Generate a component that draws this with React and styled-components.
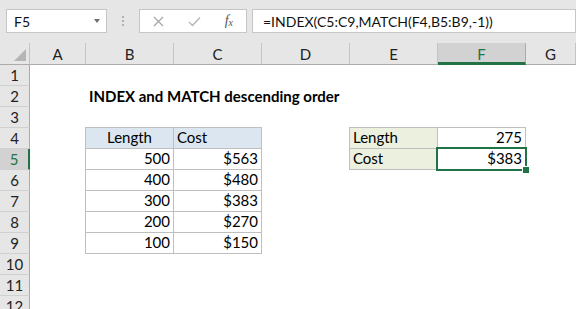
import styled, { createGlobalStyle } from 'styled-components'

const GlobalStyle = createGlobalStyle`
  body {
    margin: 0;
    background: #fff;
    font-family: Lato, "Liberation Sans", sans-serif;
  }
`

const GREEN = '#217346'
const COLUMNS = ['A', 'B', 'C', 'D', 'E', 'F', 'G']
const ROW_COUNT = 12

// contenu des cellules: cle = adresse
const cellules = {
    B2: { text: 'INDEX and MATCH descending order', bold: true },
    B4: { text: 'Length', table: true, fill: '#dce6f1', align: 'center' },
    C4: { text: 'Cost', table: true, fill: '#dce6f1' },
    B5: { text: '500', table: true, align: 'right' },
    C5: { text: '$563', table: true, align: 'right' },
    B6: { text: '400', table: true, align: 'right' },
    C6: { text: '$480', table: true, align: 'right' },
    B7: { text: '300', table: true, align: 'right' },
    C7: { text: '$383', table: true, align: 'right' },
    B8: { text: '200', table: true, align: 'right' },
    C8: { text: '$270', table: true, align: 'right' },
    B9: { text: '100', table: true, align: 'right' },
    C9: { text: '$150', table: true, align: 'right' },
    E4: { text: 'Length', table: true, fill: '#ebf1de' },
    F4: { text: '275', table: true, align: 'right' },
    E5: { text: 'Cost', table: true, fill: '#ebf1de' },
    F5: { text: '$383', table: true, align: 'right', selected: true },
}

const App = () => {
    return (
        <Window>
            <GlobalStyle />
            <Toolbar>
                <NameBox>
                    <span>F5</span>
                    <DropArrow />
                </NameBox>
                <Grip>
                    <i /><i /><i />
                </Grip>
                <ActionBox>
                    <svg width="11" height="11" viewBox="0 0 11 11">
                        <path d="M1 1 L10 10 M10 1 L1 10" stroke="#a8a8a8" strokeWidth="1.3" fill="none" />
                    </svg>
                    <svg width="13" height="11" viewBox="0 0 13 11">
                        <path d="M1 6 L4.5 9.5 L12 1.5" stroke="#b4b4b4" strokeWidth="1.3" fill="none" />
                    </svg>
                    <Fx>f<sub>x</sub></Fx>
                </ActionBox>
                <FormulaBox>=INDEX(C5:C9,MATCH(F4,B5:B9,-1))</FormulaBox>
            </Toolbar>

            <Sheet>
                <Corner><Triangle /></Corner>
                {COLUMNS.map((col) => (
                    <ColHead key={col} $active={col === 'F'}>{col}</ColHead>
                ))}

                {Array.from({ length: ROW_COUNT }, (_, i) => i + 1).map((row) => (
                    <>
                        <RowHead key={'r' + row} $active={row === 5}>{row}</RowHead>
                        {COLUMNS.map((col) => {
                            const c = cellules[col + row] || {}
                            return (
                                <Cell
                                    key={col + row}
                                    $table={c.table}
                                    $fill={c.fill}
                                    $align={c.align}
                                    $bold={c.bold}
                                >
                                    {c.text}
                                    {c.selected ? <Selection><Handle /></Selection> : null}
                                </Cell>
                            )
                        })}
                    </>
                ))}
            </Sheet>
        </Window>
    )
}

const Window = styled.div`
    width: 576px;
    height: 309px;
    overflow: hidden;
    background: #fff;
`

const Toolbar = styled.div`
    display: flex;
    align-items: flex-start;
    height: 43px;
    box-sizing: border-box;
    padding: 9px 0 0 6px;
    background: #e6e6e6;
`

const Box = styled.div`
    height: 24px;
    box-sizing: border-box;
    background: #fff;
    border: 1px solid #c6c6c6;
    display: flex;
    align-items: center;
    font-size: 14px;
    color: #111;
`

const NameBox = styled(Box)`
    width: 101px;
    padding: 0 6px 0 7px;
    justify-content: space-between;
`

const DropArrow = styled.div`
    width: 0;
    height: 0;
    border-left: 3.5px solid transparent;
    border-right: 3.5px solid transparent;
    border-top: 4px solid #6f6f6f;
`

const Grip = styled.div`
    width: 32px;
    height: 24px;
    display: flex;
    flex-direction: column;
    align-items: center;
    justify-content: center;
    gap: 2px;

    i {
        width: 2px;
        height: 2px;
        background: #b0b0b0;
    }
`

const ActionBox = styled(Box)`
    width: 108px;
    padding: 0 13px 0 13px;
    justify-content: space-between;
`

const Fx = styled.span`
    font-family: "Liberation Serif", serif;
    font-style: italic;
    font-size: 14px;
    color: #555;

    sub {
        font-size: 10px;
        vertical-align: -1px;
    }
`

const FormulaBox = styled(Box)`
    flex: 1;
    margin-left: 5px;
    padding-left: 10px;
    font-size: 14px;
`

const Sheet = styled.div`
    display: grid;
    grid-template-columns: 30px 56px repeat(5, 88px) 1fr;
    grid-template-rows: 22px;
    grid-auto-rows: 21px;
    font-size: 15px;
    color: #000;
`

const Corner = styled.div`
    background: #e6e6e6;
    border-right: 1px solid #c4c4c4;
    border-bottom: 1px solid #ababab;
    position: relative;
`

const Triangle = styled.div`
    position: absolute;
    right: 3px;
    bottom: 3px;
    width: 0;
    height: 0;
    border-left: 12px solid transparent;
    border-bottom: 12px solid #b5b5b5;
`

const ColHead = styled.div`
    display: flex;
    align-items: center;
    justify-content: center;
    box-sizing: border-box;
    background: ${(p) => (p.$active ? '#d2d2d2' : '#e6e6e6')};
    color: ${(p) => (p.$active ? GREEN : '#222')};
    border-right: 1px solid ${(p) => (p.$active ? '#ababab' : '#c4c4c4')};
    border-bottom: ${(p) => (p.$active ? `3px solid ${GREEN}` : '1px solid #ababab')};
    padding-top: ${(p) => (p.$active ? '2px' : '0')};
`

const RowHead = styled.div`
    display: flex;
    align-items: center;
    justify-content: center;
    box-sizing: border-box;
    background: ${(p) => (p.$active ? '#d2d2d2' : '#e6e6e6')};
    color: ${(p) => (p.$active ? GREEN : '#222')};
    border-right: ${(p) => (p.$active ? `2px solid ${GREEN}` : '1px solid #ababab')};
    border-bottom: 1px solid #d0d0d0;
`

const Cell = styled.div`
    position: relative;
    display: flex;
    align-items: flex-end;
    justify-content: ${(p) =>
        p.$align === 'right' ? 'flex-end' : p.$align === 'center' ? 'center' : 'flex-start'};
    padding: 0 3px 2px 3px;
    white-space: nowrap;
    font-weight: ${(p) => (p.$bold ? 700 : 400)};
    background: ${(p) => p.$fill || 'transparent'};
    ${(p) =>
        p.$table &&
        `
        margin: -1px 0 0 -1px;
        border: 1px solid #bfbfbf;
    `}
`

const Selection = styled.div`
    position: absolute;
    inset: -2px;
    border: 2px solid ${GREEN};
    pointer-events: none;
`

const Handle = styled.div`
    position: absolute;
    right: -4px;
    bottom: -4px;
    width: 6px;
    height: 6px;
    background: ${GREEN};
    box-shadow: -1px -1px 0 #fff;
`

export default App
